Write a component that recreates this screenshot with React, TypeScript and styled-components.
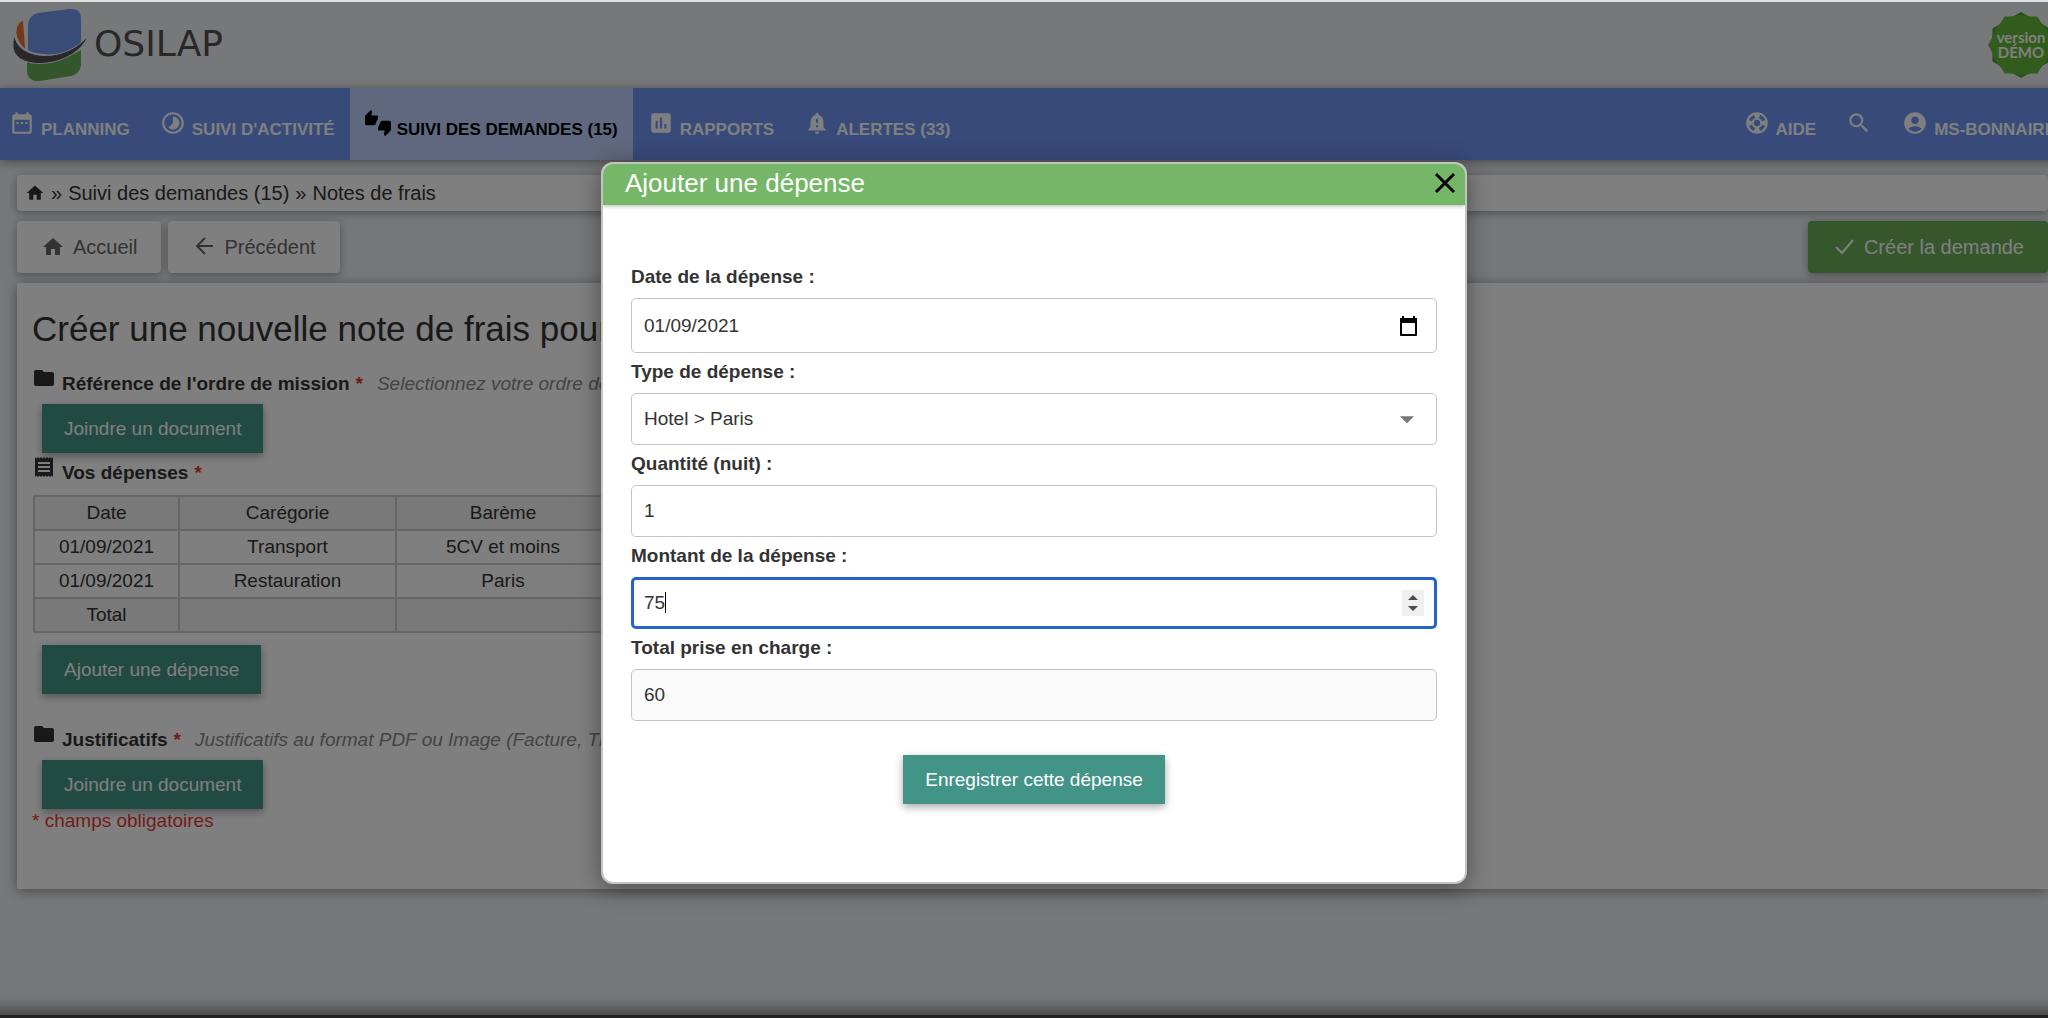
import React from 'react';
import styled, { createGlobalStyle } from 'styled-components';
import {
  MdDateRange, MdTimelapse, MdThumbsUpDown, MdAssessment, MdNotificationImportant,
  MdSearch, MdAccountCircle, MdHome, MdFolder, MdReceipt, MdArrowDropDown, MdSupport,
} from 'react-icons/md';

const GlobalStyle = createGlobalStyle`
  *, *::before, *::after { box-sizing: border-box; }
  body {
    margin: 0;
    background: #eef0f4;
    color: #333;
    font: 19px/24px Arial, "Liberation Sans", sans-serif;
  }
  button, input, select { font: inherit; color: inherit; }
`;

const Viewport = styled.div`
  position: relative;
  min-height: 100vh;
  overflow: hidden;
  border-top: 2px solid #dcdee0;
  border-bottom: 3px solid #222;
  display: flex;
`;

const Page = styled.div`
  flex: none;
  width: calc(100% + 17px);
`;

const Header = styled.header`
  display: flex;
  align-items: center;
  justify-content: space-between;
  height: 86px;
  padding: 0 10px;
`;

const Brand = styled.a`
  display: flex;
  align-items: center;
  gap: 6px;
  padding-bottom: 2px;
  color: #505050;
  font: 36px/40px "DejaVu Sans", sans-serif;
  text-decoration: none;
`;

const Nav = styled.nav`
  display: flex;
  justify-content: space-between;
  height: 72px;
  background: #6e94f4;
  box-shadow: 0 2px 10px rgba(0, 0, 0, 0.4);
`;

const NavGroup = styled.div`
  display: flex;
  a:first-child { padding-left: 9px; }
  a:last-child { padding-right: 9px; }
`;

const NavLink = styled.a<{ $active?: boolean }>`
  display: flex;
  align-items: center;
  gap: 6px;
  padding: 0 15px;
  background: ${(p) => (p.$active ? '#c0d0fe' : 'transparent')};
  color: ${(p) => (p.$active ? '#000' : '#fff')};
  font-size: 17px;
  font-weight: bold;
  text-decoration: none;
  white-space: nowrap;
  svg { flex: none; margin-bottom: 2px; }
  span { padding-top: 12px; }
`;

const Main = styled.main`
  display: flex;
  flex-direction: column;
  gap: 10px;
  padding: 15px 17px;
`;

const Breadcrumb = styled.nav`
  display: flex;
  align-items: center;
  gap: 6px;
  height: 36px;
  padding: 0 8px;
  border-radius: 4px;
  background: #fff;
  box-shadow: 0 2px 10px rgba(0, 0, 0, 0.35);
  font-size: 20px;
  a { display: flex; color: inherit; text-decoration: none; }
`;

const Toolbar = styled.div`
  display: flex;
  gap: 7px;
`;

const ToolButton = styled.button<{ $primary?: boolean }>`
  display: flex;
  align-items: center;
  gap: 8px;
  height: 52px;
  padding: 0 24px;
  margin-left: ${(p) => (p.$primary ? 'auto' : '0')};
  border: 0;
  border-radius: 4px;
  background: ${(p) => (p.$primary ? '#6cac58' : '#fff')};
  color: ${(p) => (p.$primary ? '#fff' : '#666')};
  font-size: 20px;
  box-shadow: 0 2px 8px rgba(0, 0, 0, 0.35);
`;

const Card = styled.section`
  min-height: 606px;
  padding: 22px 15px;
  background: #fff;
  box-shadow: 0 2px 12px rgba(0, 0, 0, 0.4);
`;

const Title = styled.h1`
  margin: 0 0 11px;
  font-size: 35px;
  line-height: 48px;
  font-weight: normal;
`;

const SectionTitle = styled.h2`
  display: flex;
  align-items: center;
  gap: 6px;
  margin: 0;
  height: 40px;
  font-size: 19px;
  line-height: 24px;
  white-space: nowrap;
  svg { flex: none; margin-bottom: 12px; }
`;

const Required = styled.span`
  color: #e53935;
`;

const Hint = styled.em`
  padding-left: 8px;
  color: #888;
  font-weight: normal;
`;

const ActionButton = styled.button`
  display: block;
  height: 49px;
  padding: 0 22px;
  border: 0;
  background: #429486;
  color: #fff;
  box-shadow: 0 3px 8px rgba(0, 0, 0, 0.35);
`;

const SectionAction = styled.div<{ $after?: number }>`
  padding: 0 10px;
  margin-bottom: ${(p) => p.$after ?? 0}px;
`;

const Table = styled.table`
  width: 1000px;
  margin: 2px 0 12px 1px;
  border-collapse: collapse;
  table-layout: fixed;
  text-align: center;
  th, td { height: 34px; padding: 0; border: 2px solid #ccc; font-weight: normal; }
  thead, tfoot { background: #f2f2f2; }
`;

const Note = styled.p`
  margin: 0;
  color: #e53935;
`;

const Backdrop = styled.div`
  position: absolute;
  inset: 0;
  display: flex;
  justify-content: center;
  align-items: flex-start;
  padding: 160px 0 0 20px;
  background: rgba(0, 0, 0, 0.5);
  box-shadow: inset 0 -22px 14px -16px rgba(0, 0, 0, 0.45);
`;

const Dialog = styled.div`
  width: 866px;
  min-height: 722px;
  border: 2px solid #c4c4c4;
  border-radius: 12px;
  background: #fff;
  box-shadow: 0 4px 24px rgba(0, 0, 0, 0.4);
  overflow: hidden;
`;

const DialogHeader = styled.div`
  display: flex;
  align-items: center;
  justify-content: space-between;
  height: 41px;
  padding: 0 6px 3px 22px;
  background: #75b667;
  box-shadow: 0 1px 4px rgba(0, 0, 0, 0.3);
  h2 { margin: 0; color: #fff; font-size: 26px; line-height: 32px; font-weight: normal; }
`;

const CloseButton = styled.button`
  display: flex;
  padding: 0;
  border: 0;
  background: none;
  color: #000;
`;

const Form = styled.form`
  display: flex;
  flex-direction: column;
  padding: 53px 28px;
  > button { align-self: center; margin-top: 34px; }
`;

const Field = styled.div`
  label { display: block; height: 40px; padding-top: 3px; line-height: 32px; font-weight: bold; }
`;

const Control = styled.div<{ $tall?: boolean }>`
  position: relative;
  input, select {
    display: block;
    width: 100%;
    height: ${(p) => (p.$tall ? 55 : 52)}px;
    padding: 0 12px;
    border: 1px solid #c4c4c4;
    border-radius: 5px;
    background: #fff;
    appearance: none;
  }
  input:read-only { background: #fafafa; }
  input:focus { outline: 0; border: 3px solid #2563c9; padding: 0 10px; caret-color: transparent; }
  input[type='number']::-webkit-inner-spin-button { display: none; }
`;

const Adornment = styled.span<{ $right?: number }>`
  position: absolute;
  right: ${(p) => p.$right ?? 17}px;
  top: 0;
  bottom: 0;
  display: flex;
  align-items: center;
  pointer-events: none;
  color: #777;
  button { display: flex; padding: 0; border: 0; background: none; color: #000; }
`;

const Caret = styled.span`
  position: absolute;
  left: 34px;
  top: 15px;
  width: 1px;
  height: 21px;
  background: #000;
`;

const Logo = () => (
  <svg width="78" height="76" viewBox="10 6 78 76" aria-hidden="true">
    <path d="M28 25Q29 15 38 13L69 9Q81 8 81 18V44Q66 57 45 54Q35 54 28 50Z" fill="#7296ee" />
    <path d="M27 60Q55 66 81 50V66Q79 74 71 76L40 81Q27 82 27 70Z" fill="#68ac58" />
    <path d="M23 21L25 49Q14 38 17 27Q19 22 23 21Z" fill="#e87030" />
    <path d="M15 35C15 58 62 66 88 36C76 67 17 73 13 48Q12 41 15 35Z" fill="#505050" stroke="#eef0f4" strokeWidth="1" />
  </svg>
);

const hexagon = (turn: number) =>
  Array.from({ length: 6 }, (_, i) => {
    const a = ((i * 60 + turn) * Math.PI) / 180;
    return `${34 + 33 * Math.sin(a)},${34 - 33 * Math.cos(a)}`;
  }).join(' ');

const DemoSeal = () => (
  <svg width="68" height="68" viewBox="0 0 68 68">
    <polygon points={hexagon(0)} fill="#40a040" />
    <circle cx="34" cy="34" r="30" fill="#64b838" />
    <polygon points={hexagon(30)} fill="#64b838" />
    <g fill="#fff" fontFamily="Lato, sans-serif" fontSize="15" fontWeight="bold" textAnchor="middle">
      <text x="34" y="32">version</text>
      <text x="34" y="47">DÉMO</text>
    </g>
  </svg>
);

const ArrowIcon = () => (
  <svg width="24" height="24" viewBox="0 0 24 24" fill="none" stroke="currentColor" strokeWidth="2">
    <path d="M21 11H5M13 3L5 11L13 19" />
  </svg>
);

const CheckIcon = () => (
  <svg width="24" height="24" viewBox="0 0 24 24" fill="none" stroke="currentColor" strokeWidth="2">
    <path d="M4 12L10 18L21 5" />
  </svg>
);

const CloseIcon = () => (
  <svg width="28" height="28" viewBox="0 0 28 28" fill="none" stroke="currentColor" strokeWidth="3">
    <path d="M5 5L23 23M23 5L5 23" />
  </svg>
);

const CalendarIcon = () => (
  <svg width="22" height="22" viewBox="0 0 22 22">
    <path d="M3 4H18V20H3Z" fill="none" stroke="#000" strokeWidth="2" strokeLinejoin="round" />
    <path d="M2 3H19V8H2ZM4 1H6V3H4ZM15 1H17V3H15Z" />
  </svg>
);

const StepperIcon = () => (
  <svg width="22" height="26" viewBox="0 0 22 26">
    <rect width="22" height="26" fill="#efefef" />
    <path d="M6 10L11 5L16 10ZM6 16L11 21L16 16Z" fill="#4c4c4c" />
  </svg>
);

const expenses = [
  ['01/09/2021', 'Transport', '5CV et moins'],
  ['01/09/2021', 'Restauration', 'Paris'],
];

export default function App() {
  return (
    <>
      <GlobalStyle />
      <Viewport>
        <Page>
          <Header>
            <Brand href="#"><Logo />OSILAP</Brand>
            <DemoSeal />
          </Header>
          <Nav>
            <NavGroup>
              <NavLink href="#"><MdDateRange size={26} /><span>PLANNING</span></NavLink>
              <NavLink href="#"><MdTimelapse size={26} /><span>SUIVI D'ACTIVITÉ</span></NavLink>
              <NavLink href="#" $active><MdThumbsUpDown size={26} /><span>SUIVI DES DEMANDES (15)</span></NavLink>
              <NavLink href="#"><MdAssessment size={26} /><span>RAPPORTS</span></NavLink>
              <NavLink href="#"><MdNotificationImportant size={26} /><span>ALERTES (33)</span></NavLink>
            </NavGroup>
            <NavGroup>
              <NavLink href="#"><MdSupport size={26} /><span>AIDE</span></NavLink>
              <NavLink href="#" aria-label="Rechercher"><MdSearch size={26} /></NavLink>
              <NavLink href="#"><MdAccountCircle size={26} /><span>MS-BONNAIRE</span></NavLink>
            </NavGroup>
          </Nav>
          <Main>
            <Breadcrumb>
              <a href="#" aria-label="Accueil"><MdHome size={20} /></a>
              <span>»</span><a href="#">Suivi des demandes (15)</a><span>»</span><span>Notes de frais</span>
            </Breadcrumb>
            <Toolbar>
              <ToolButton><MdHome size={24} />Accueil</ToolButton>
              <ToolButton><ArrowIcon />Précédent</ToolButton>
              <ToolButton $primary><CheckIcon />Créer la demande</ToolButton>
            </Toolbar>
            <Card>
              <Title>Créer une nouvelle note de frais pour</Title>
              <SectionTitle>
                <MdFolder size={24} />Référence de l'ordre de mission <Required>*</Required>
                <Hint>Selectionnez votre ordre de</Hint>
              </SectionTitle>
              <SectionAction><ActionButton>Joindre un document</ActionButton></SectionAction>
              <SectionTitle><MdReceipt size={24} />Vos dépenses <Required>*</Required></SectionTitle>
              <Table>
                <colgroup>
                  <col style={{ width: 145 }} /><col style={{ width: 217 }} /><col style={{ width: 214 }} /><col />
                </colgroup>
                <thead><tr><th>Date</th><th>Carégorie</th><th>Barème</th><th /></tr></thead>
                <tbody>
                  {expenses.map((row) => (
                    <tr key={row[1]}>{row.map((c) => <td key={c}>{c}</td>)}<td /></tr>
                  ))}
                </tbody>
                <tfoot><tr><td>Total</td><td /><td /><td /></tr></tfoot>
              </Table>
              <SectionAction $after={26}><ActionButton>Ajouter une dépense</ActionButton></SectionAction>
              <SectionTitle>
                <MdFolder size={24} />Justificatifs <Required>*</Required>
                <Hint>Justificatifs au format PDF ou Image (Facture, Tic</Hint>
              </SectionTitle>
              <SectionAction><ActionButton>Joindre un document</ActionButton></SectionAction>
              <Note>* champs obligatoires</Note>
            </Card>
          </Main>
        </Page>
        <Backdrop>
          <Dialog role="dialog" aria-labelledby="dialog-title">
            <DialogHeader>
              <h2 id="dialog-title">Ajouter une dépense</h2>
              <CloseButton aria-label="Fermer"><CloseIcon /></CloseButton>
            </DialogHeader>
            <Form>
              <Field>
                <label htmlFor="date">Date de la dépense :</label>
                <Control $tall>
                  <input id="date" type="text" defaultValue="01/09/2021" />
                  <Adornment><button type="button" aria-label="Calendrier"><CalendarIcon /></button></Adornment>
                </Control>
              </Field>
              <Field>
                <label htmlFor="type">Type de dépense :</label>
                <Control>
                  <select id="type"><option>Hotel &gt; Paris</option></select>
                  <Adornment $right={13}><MdArrowDropDown size={34} /></Adornment>
                </Control>
              </Field>
              <Field>
                <label htmlFor="quantity">Quantité (nuit) :</label>
                <Control><input id="quantity" type="number" defaultValue="1" /></Control>
              </Field>
              <Field>
                <label htmlFor="amount">Montant de la dépense :</label>
                <Control>
                  <input id="amount" type="number" defaultValue="75" autoFocus />
                  <Caret />
                  <Adornment $right={13}><StepperIcon /></Adornment>
                </Control>
              </Field>
              <Field>
                <label htmlFor="total">Total prise en charge :</label>
                <Control><input id="total" type="text" value="60" readOnly /></Control>
              </Field>
              <ActionButton type="button">Enregistrer cette dépense</ActionButton>
            </Form>
          </Dialog>
        </Backdrop>
      </Viewport>
    </>
  );
}
